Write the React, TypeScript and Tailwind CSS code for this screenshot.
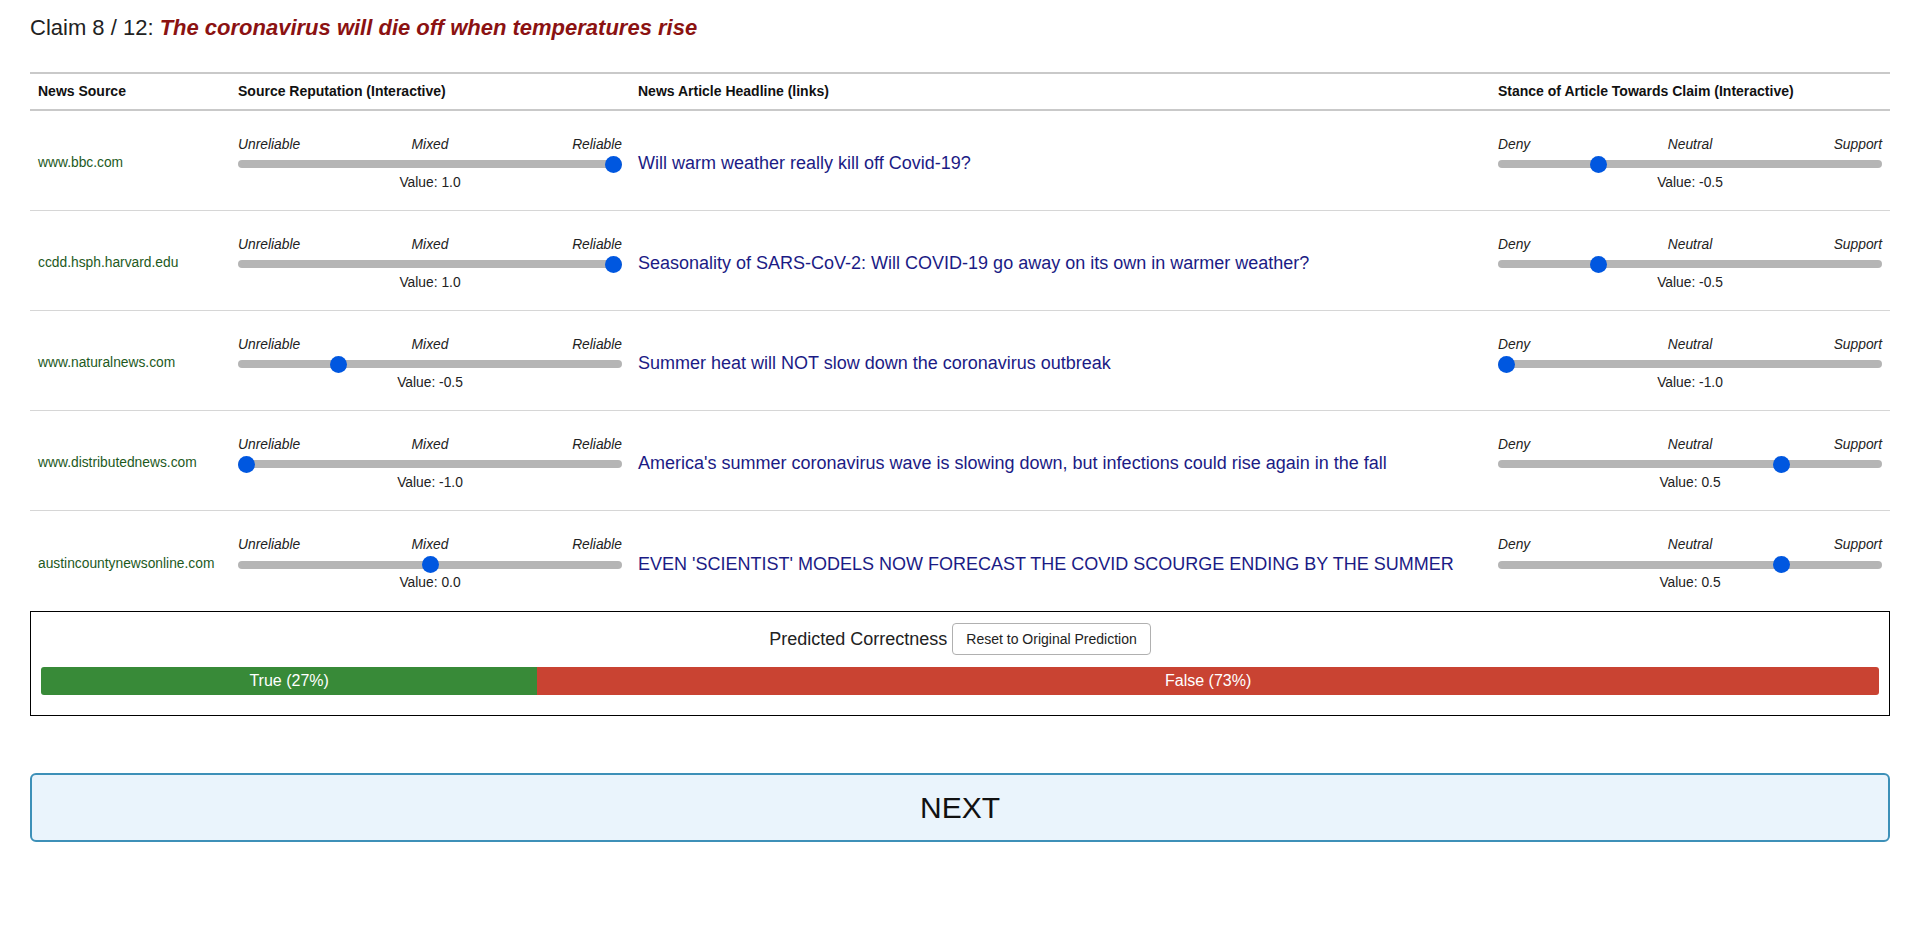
type Row = {
  source: string;
  reputation: number;
  headline: string;
  stance: number;
};

const rows: Row[] = [
  {
    source: 'www.bbc.com',
    reputation: 1.0,
    headline: 'Will warm weather really kill off Covid-19?',
    stance: -0.5,
  },
  {
    source: 'ccdd.hsph.harvard.edu',
    reputation: 1.0,
    headline: 'Seasonality of SARS-CoV-2: Will COVID-19 go away on its own in warmer weather?',
    stance: -0.5,
  },
  {
    source: 'www.naturalnews.com',
    reputation: -0.5,
    headline: 'Summer heat will NOT slow down the coronavirus outbreak',
    stance: -1.0,
  },
  {
    source: 'www.distributednews.com',
    reputation: -1.0,
    headline: "America's summer coronavirus wave is slowing down, but infections could rise again in the fall",
    stance: 0.5,
  },
  {
    source: 'austincountynewsonline.com',
    reputation: 0.0,
    headline: "EVEN 'SCIENTIST' MODELS NOW FORECAST THE COVID SCOURGE ENDING BY THE SUMMER",
    stance: 0.5,
  },
];

// track is 384px wide, thumb 17px
const TRAVEL = 384 - 17;

function Slider({ value, labels }: { value: number; labels: [string, string, string] }) {
  return (
    <div className="w-[384px]">
      <div className="grid grid-cols-3 text-[13.8px] leading-[16px] italic text-[#222]">
        <span className="text-left">{labels[0]}</span>
        <span className="text-center">{labels[1]}</span>
        <span className="text-right">{labels[2]}</span>
      </div>
      <div className="relative mt-[3px] h-[17px] flex items-center">
        <div className="h-[8px] w-full rounded-full bg-[#b5b5b5]" />
        <div
          className="absolute top-0 h-[17px] w-[17px] rounded-full bg-[#0057e0]"
          style={{ left: ((value + 1) / 2) * TRAVEL }}
        />
      </div>
      <div className="mt-[2px] text-center text-[13.8px] leading-[16px] text-[#222]">
        Value: {value.toFixed(1)}
      </div>
    </div>
  );
}

export default function App() {
  const truePct = 27;

  return (
    <div className="min-h-screen bg-white px-[30px] pt-[15px] font-['Liberation_Sans',Arial,sans-serif] text-[#222]">
      <h1 className="text-[22px] leading-[25px]">
        Claim 8 / 12:{' '}
        <span className="font-bold italic text-[#8b1212]">
          The coronavirus will die off when temperatures rise
        </span>
      </h1>

      <div className="mt-[32px]">
        <div className="grid h-[39px] grid-cols-[200px_400px_1fr_400px] items-center border-y-2 border-[#c9c9c9] text-[14px] font-bold text-[#111]">
          <div className="px-2">News Source</div>
          <div className="px-2">Source Reputation (Interactive)</div>
          <div className="px-2">News Article Headline (links)</div>
          <div className="px-2">Stance of Article Towards Claim (Interactive)</div>
        </div>

        {rows.map((r, i) => (
          <div
            key={r.source}
            className={`grid h-[100px] grid-cols-[200px_400px_1fr_400px] items-center pt-[6px] ${
              i < rows.length - 1 ? 'border-b border-[#d6d6d6]' : ''
            }`}
          >
            <div className="px-2 text-[13.8px] text-[#1d5a1d]">{r.source}</div>
            <div className="px-2">
              <Slider value={r.reputation} labels={['Unreliable', 'Mixed', 'Reliable']} />
            </div>
            <div className="px-2">
              <a href="#" className="text-[18px] text-[#1b1b85]">
                {r.headline}
              </a>
            </div>
            <div className="px-2">
              <Slider value={r.stance} labels={['Deny', 'Neutral', 'Support']} />
            </div>
          </div>
        ))}
      </div>

      <div className="border border-black px-[10px] pt-[11px] pb-[20px]">
        <div className="flex items-center justify-center gap-[5px]">
          <span className="text-[18px] text-[#222]">Predicted Correctness</span>
          <button className="h-[32px] rounded-[4px] border border-[#b0b0b0] bg-white px-[13px] text-[14px] text-[#222]">
            Reset to Original Prediction
          </button>
        </div>
        <div className="mt-[12px] flex h-[28px] overflow-hidden rounded-[3px] text-[16px] text-white">
          <div
            className="flex items-center justify-center bg-[#388a38]"
            style={{ width: `${truePct}%` }}
          >
            True ({truePct}%)
          </div>
          <div className="flex flex-1 items-center justify-center bg-[#c94332]">
            False ({100 - truePct}%)
          </div>
        </div>
      </div>

      <button className="mt-[57px] flex h-[69px] w-full items-center justify-center rounded-[6px] border-2 border-[#3d90b8] bg-[#eaf4fc] text-[30px] text-[#111]">
        NEXT
      </button>
    </div>
  );
}
